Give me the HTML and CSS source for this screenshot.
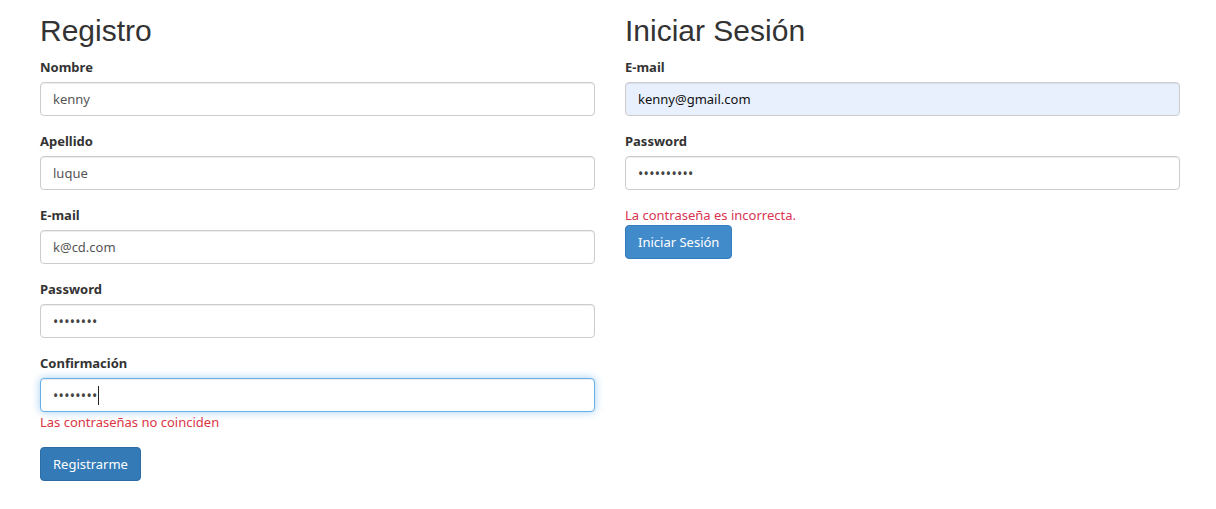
FILE: index.html
```html
<!DOCTYPE html>
<html lang="es">
<head>
<meta charset="utf-8">
<title>Registro</title>
<link rel="stylesheet" href="styles.css">
</head>
<body>
<div class="container">
  <div class="col">
    <h2 class="title">Registro</h2>
    <form class="form">
      <div class="group">
        <label class="label">Nombre</label>
        <input class="control" type="text" value="kenny">
      </div>
      <div class="group">
        <label class="label">Apellido</label>
        <input class="control" type="text" value="luque">
      </div>
      <div class="group">
        <label class="label">E-mail</label>
        <input class="control" type="text" value="k@cd.com">
      </div>
      <div class="group">
        <label class="label">Password</label>
        <input class="control" type="password" value="12345678">
      </div>
      <div class="group">
        <label class="label">Confirmación</label>
        <div class="field">
          <input class="control focused" type="password" value="12345679">
          <span class="caret"></span>
        </div>
        <div class="error">Las contraseñas no coinciden</div>
      </div>
      <button class="btn btn-dark" type="button">Registrarme</button>
    </form>
  </div>
  <div class="col">
    <h2 class="title">Iniciar Sesión</h2>
    <form class="form">
      <div class="group">
        <label class="label">E-mail</label>
        <input class="control autofill" type="text" value="kenny@gmail.com">
      </div>
      <div class="group">
        <label class="label">Password</label>
        <input class="control" type="password" value="1234567890">
      </div>
      <div class="error error-pink">La contraseña es incorrecta.</div>
      <button class="btn btn-light" type="button">Iniciar Sesión</button>
    </form>
  </div>
</div>
</body>
</html>
```
FILE: styles.css
```css
* { box-sizing: border-box; }
html, body {
  margin: 0;
  padding: 0;
  background: #fff;
}
body {
  font-family: "Noto Sans", "Open Sans", Arial, sans-serif;
  font-size: 14px;
  line-height: 20px;
  color: #333;
}
.container {
  display: flex;
  gap: 30px;
  padding: 14px 0 0 40px;
}
.col {
  width: 555px;
}
.title {
  font-family: "Liberation Sans", Arial, sans-serif;
  font-weight: 400;
  font-size: 30px;
  line-height: 33px;
  margin: 0 0 10px;
  color: #333;
}
.form { margin: 0; }
.group {
  margin-bottom: 15px;
}
.label {
  display: block;
  font-weight: 700;
  font-size: 13px;
  line-height: 20px;
  margin-bottom: 5px;
  color: #333;
}
.field {
  position: relative;
}
.control {
  display: block;
  width: 100%;
  height: 34px;
  padding: 6px 12px;
  font-family: "Noto Sans", "Open Sans", Arial, sans-serif;
  font-size: 13px;
  line-height: 20px;
  color: #555;
  background: #fff;
  border: 1px solid #ccc;
  border-radius: 4px;
  box-shadow: inset 0 1px 1px rgba(0,0,0,.075);
  outline: none;
}
.control[type="password"] {
  font-size: 14px;
  letter-spacing: 0.3px;
  color: #444;
}
.focused {
  border-color: #66afe9;
  box-shadow: inset 0 1px 1px rgba(0,0,0,.075), 0 0 8px rgba(102,175,233,.6);
}
.caret {
  position: absolute;
  left: 58px;
  top: 8px;
  width: 1px;
  height: 19px;
  background: #222;
}
.autofill {
  background: #e8f0fe;
  color: #111;
}
.error {
  color: #dc3545;
  font-size: 13px;
  line-height: 20px;
  margin-top: 0;
}
.error-pink {
  color: #d93452;
}
.btn {
  display: inline-block;
  height: 34px;
  padding: 6px 12px;
  font-family: "Noto Sans", "Open Sans", Arial, sans-serif;
  font-size: 13px;
  line-height: 20px;
  color: #fff;
  border: 1px solid transparent;
  border-radius: 4px;
  cursor: pointer;
}
.btn-dark {
  background: #337ab7;
  border-color: #2e6da4;
}
.btn-light {
  background: #428bca;
  border-color: #357ebd;
}
```
